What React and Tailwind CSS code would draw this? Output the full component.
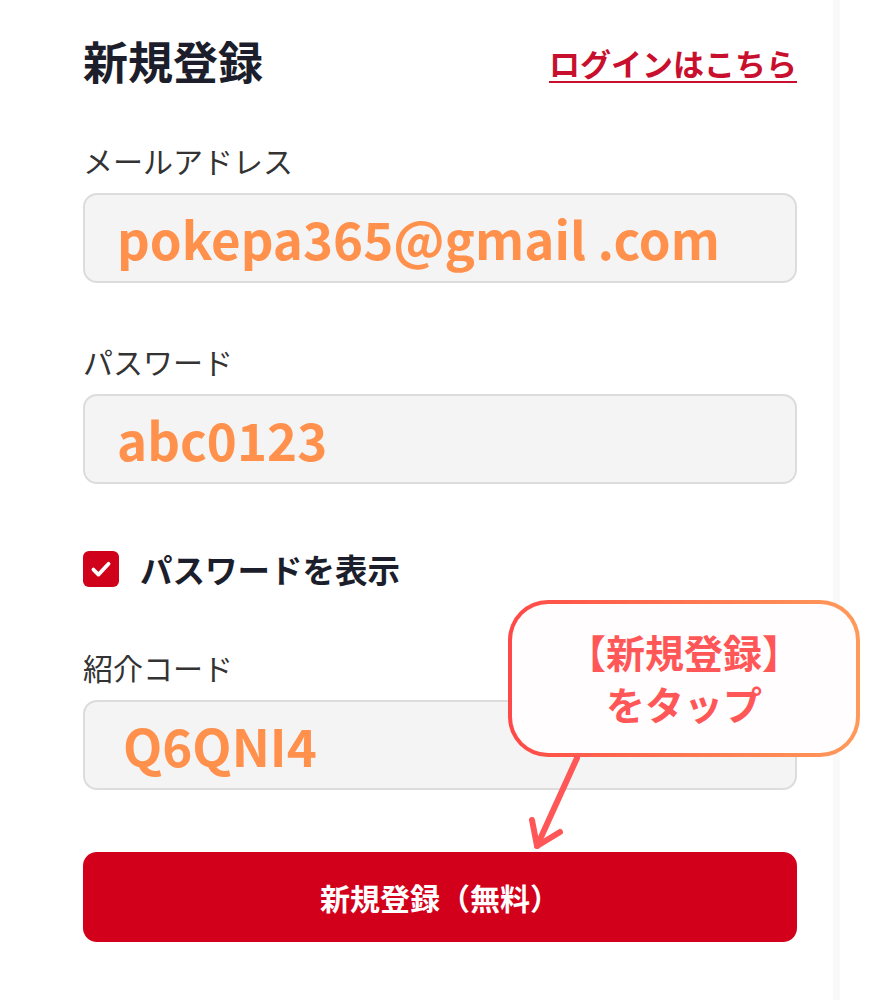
import React from 'react';

const JP = { fontFamily: '"Noto Sans CJK JP", "Noto Sans", sans-serif' };

function Field({ label, value, indent = 'pl-[32px]' }) {
  return (
    <div>
      <div className="h-[30px] text-[30px] leading-none text-[#333]">{label}</div>
      <div
        className={`mt-[18px] flex h-[90px] items-center rounded-[14px] border-2 border-[#dcdcdc] bg-[#f4f4f4] ${indent} text-[51px] font-bold text-[#ff914d]`}
      >
        <span className="leading-none">{value}</span>
      </div>
    </div>
  );
}

function CheckIcon() {
  return (
    <svg viewBox="0 0 24 24" className="h-[28px] w-[28px]" fill="none" aria-hidden="true">
      <path d="M5.5 12.5l4.3 4.3L18.5 7.5" stroke="white" strokeWidth="3.2" strokeLinecap="round" strokeLinejoin="round" />
    </svg>
  );
}

export default function App() {
  return (
    <div className="relative flex h-[1000px] w-[880px] overflow-hidden bg-white" style={JP}>
      <div className="w-[833px] pl-[83px] pr-[36px] pt-[37px]">
        {/* header */}
        <div className="flex h-[46px] items-center justify-between">
          <h1 className="text-[45px] font-bold leading-none text-[#1c1e2b]">新規登録</h1>
          <a
            href="#"
            className="mt-[4px] text-[31px] font-bold leading-none text-[#c8102e] underline decoration-2 underline-offset-[5px]"
          >
            ログインはこちら
          </a>
        </div>

        <div className="mt-[62px]">
          <Field label="メールアドレス" value="pokepa365@gmail .com" />
        </div>

        <div className="mt-[63px]">
          <Field label="パスワード" value="abc0123" />
        </div>

        <div className="mt-[67px] flex h-[36px] items-center gap-[21px]">
          <span className="flex h-[36px] w-[36px] items-center justify-center rounded-[6px] bg-[#d0021b]">
            <CheckIcon />
          </span>
          <span className="text-[32.5px] font-bold leading-none text-[#1c1e2b]">パスワードを表示</span>
        </div>

        <div className="mt-[65px]">
          <Field label="紹介コード" value="Q6QNI4" indent="pl-[38px]" />
        </div>

        <button
          type="button"
          className="mt-[62px] flex h-[90px] w-full items-center justify-center rounded-[14px] bg-[#d3001c] text-[30px] font-bold text-white"
        >
          新規登録（無料）
        </button>
      </div>
      <div className="w-[7px] bg-[#f9f9f9]" />
      <div className="flex-1" />

      {/* callout */}
      <div className="absolute left-[508px] top-[600px] h-[157px] w-[352px] rounded-[40px] bg-gradient-to-r from-[#ff4747] to-[#ff9a5a] p-[4px]">
        <div className="flex h-full w-full flex-col items-center justify-center gap-[2px] rounded-[36px] bg-[#fffdfd] pb-[4px] text-[39px] font-bold leading-none text-[#ff5757]">
          <div className="h-[50px] leading-[50px]">【新規登録】</div>
          <div className="h-[50px] leading-[50px]">をタップ</div>
        </div>
      </div>
      <svg className="absolute left-[520px] top-[752px] h-[110px] w-[70px]" viewBox="0 0 70 110" fill="none" aria-hidden="true">
        <path d="M57 6L17 94" stroke="#ff5757" strokeWidth="6" strokeLinecap="round" />
        <path d="M12 68L17 94L40 80" stroke="#ff5757" strokeWidth="6" strokeLinecap="round" strokeLinejoin="round" />
      </svg>
    </div>
  );
}
